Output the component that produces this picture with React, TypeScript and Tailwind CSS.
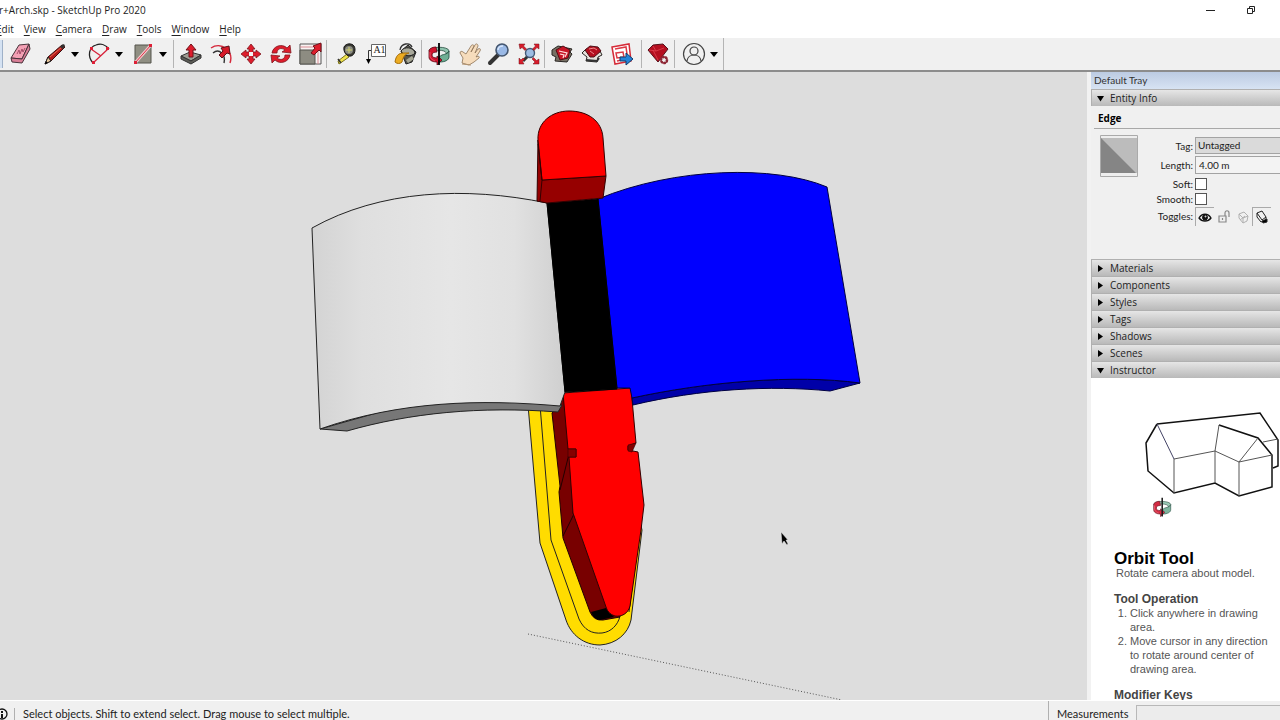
import type { ReactNode } from "react";
import clsx from "clsx";

const menus = ["Edit", "View", "Camera", "Draw", "Tools", "Window", "Help"];
const closedPanels = ["Materials", "Components", "Styles", "Tags", "Shadows", "Scenes"];

function Icon({ children }: { children: ReactNode }) {
  return (
    <svg viewBox="0 0 24 24" className="size-6" fill="none" aria-hidden="true">
      {children}
    </svg>
  );
}

function Tool({ label, children }: { label: string; children: ReactNode }) {
  return (
    <button aria-label={label} className="flex w-[30px] shrink-0 items-center justify-center">
      <Icon>{children}</Icon>
    </button>
  );
}

function DropArrow({ label }: { label: string }) {
  return (
    <button aria-label={label} className="flex w-2.5 shrink-0 items-center justify-center">
      <svg viewBox="0 0 8 5" className="h-[5px] w-2 shrink-0">
        <path d="M0 0h8L4 5z" fill="#000" />
      </svg>
    </button>
  );
}

function Group({ className, children }: { className: string; children: ReactNode }) {
  return <div className={clsx("flex h-7 shrink-0 items-center border-r border-[#b4b4b4]", className)}>{children}</div>;
}

function OrbitShape() {
  return (
    <>
      <path d="M2 9c0-5 20-5 20 0l-3 3c2-5-16-5-14 0z" fill="#8fc4ae" stroke="#2b4f43" strokeWidth=".8" />
      <path d="M22 9v6c0 3-4 5-9 5l1-3-2-2 3-2c4-1 7-2 7-4z" fill="#6fae94" stroke="#1d4a3c" strokeWidth=".8" />
      <path d="M9 5C5 5 2 7 2 9v6c0 3 3 5 8 5v3l5-5-5-4v2c-3 0-5-1-5-3s2-3 5-3z" fill="#d0142e" stroke="#5c0a16" strokeWidth=".8" />
      <path d="M3 10v5c1 2 3 3 5 4" stroke="#ea6373" strokeWidth=".8" />
      <path d="M12 1v22" stroke="#000" strokeWidth="1.8" />
    </>
  );
}

function Toolbar() {
  return (
    <div role="toolbar" className="flex h-8 shrink-0 items-center overflow-hidden bg-[#f0f0f0]">
      <div className="flex h-full shrink-0 items-center border-r border-[#b4b4b4]">
        <div className="h-7 w-[3px] shrink-0 border-r border-[#9fb1c8] bg-[#d5e2f2]" />
        <Group className="gap-1 pr-[5px] pl-[3px]">
          <Tool label="Eraser">
            <path d="M2 16 10 3l10-1-7 15z" fill="#f3a0b4" stroke="#49333b" />
            <path d="m2 16 11 1 7-15 1 5-8 14-10-1z" fill="#d97f97" stroke="#49333b" />
            <path d="m8 12 2-4 1 4 2-5 1 3 2-4" stroke="#a24d68" />
          </Tool>
          <div className="flex">
            <Tool label="Line">
              <path d="m2 22 3-7L19 3l3 2L8 19z" fill="#b31a1a" stroke="#3a1111" />
              <path d="m2 22 3-7 3 4z" fill="#e8c79a" stroke="#222" />
              <path d="m2 22 1-3 2 2z" fill="#000" />
              <path d="m7 15 12-10" stroke="#ec6752" />
              <path d="m17 5 3-3 2 1-2 4z" fill="#333" />
            </Tool>
            <DropArrow label="Line options" />
          </div>
          <div className="flex">
            <Tool label="Arc">
              <path d="M6 21C0 14 2 5 9 3c5-2 10 0 13 4" stroke="#222" strokeWidth="1.3" />
              <path d="M6 21 21 7M4 7l10 7" stroke="#d7233b" strokeWidth="1.3" />
              <path d="M5 19h3v3H5zM19 5h3v3h-3zM3 5h3v3H3z" fill="#dd1f36" />
            </Tool>
            <DropArrow label="Arc options" />
          </div>
          <div className="flex">
            <Tool label="Rectangle">
              <path d="M4 3h16v18H4z" fill="#908f83" stroke="#55544d" />
              <path d="M4 21 20 3" stroke="#f5c9cc" strokeWidth="3" />
              <path d="M4 21 20 3" stroke="#da3348" />
              <path d="M3 19h3v3H3zM18 2h3v3h-3z" fill="#dd1f36" />
            </Tool>
            <DropArrow label="Rectangle options" />
          </div>
        </Group>
        <Group className="pl-0.5">
          <Tool label="Push/Pull">
            <path d="m2 14 9-4 11 3-10 6z" fill="#9c9c92" stroke="#333" />
            <path d="m2 14 10 5 10-6v3l-10 6-10-5z" fill="#5d5d57" stroke="#333" />
            <path d="M10 15V8H7l5-6 5 6h-3v7z" fill="#de1d2c" stroke="#70121a" />
          </Tool>
          <Tool label="Offset">
            <path d="M2 6C12-1 25 9 21 21" stroke="#d5283b" strokeWidth="1.4" />
            <path d="M4 11c6-5 13 1 11 10" stroke="#333" strokeWidth="1.4" />
            <path d="m10 13 4-4-2-3 8-2 1 8-3-1-5 5z" fill="#d51928" stroke="#5d1118" />
          </Tool>
          <Tool label="Move">
            <path
              d="m12 2 4 5h-2v3h3V8l5 4-5 4v-2h-3v3h2l-4 5-4-5h2v-3H7v2l-5-4 5-4v2h3V7H8z"
              fill="#de1d2c"
              stroke="#7f1820"
              strokeWidth=".8"
            />
            <path d="M10 10h4v4h-4z" fill="#f5f5f5" />
          </Tool>
          <Tool label="Rotate">
            <path d="M3 11C4 4 13 1 18 6l3-3 1 8-9-1 3-2C12 5 8 7 8 11z" fill="#de1d2c" stroke="#7f1820" strokeWidth=".8" />
            <path d="M21 13c-1 7-10 10-15 5l-3 3-1-8 9 1-3 2c4 3 8 1 8-3z" fill="#de1d2c" stroke="#7f1820" strokeWidth=".8" />
          </Tool>
          <Tool label="Scale">
            <path d="M1 2h21v20H1z" fill="#f8f2f2" stroke="#555" />
            <path d="M19 7v15M1 5h15" stroke="#d88c93" />
            <path d="M1 8h15v14H1z" fill="#8d8c82" stroke="#55544e" />
            <path d="m12 11 4-5-2-2 8-3v9l-2-2-5 5z" fill="#de1d2c" stroke="#70121a" />
          </Tool>
        </Group>
        <Group className="pl-1">
          <Tool label="Tape Measure">
            <path d="m4 19 9-7 2 3-10 7z" fill="#efe34c" stroke="#7a721a" />
            <path d="M10 5c2-4 8-4 10-1s1 9-3 10-8-4-7-9z" fill="#3c3c35" stroke="#151515" />
            <circle cx="15" cy="8" r="4" fill="#8c8d83" />
            <path d="M15 5v6m-3-3h6" stroke="#d2d36d" />
            <path d="m4 17 3 4" stroke="#333" strokeWidth="1.5" />
          </Tool>
          <button aria-label="Text" className="relative flex w-[30px] shrink-0 items-center justify-center">
            <Icon>
              <path d="M7.500 2.500h14v12h-14z" fill="#fff" stroke="#666" />
              <path d="M7 8.500H4.500V18" stroke="#333" />
              <path d="M2 17h5l-2.500 5z" fill="#000" />
            </Icon>
            <span className="absolute inset-y-0 right-1 w-[15px] text-center font-['Liberation_Serif',serif] text-[10px] leading-[16px]">
              A1
            </span>
          </button>
          <Tool label="Paint Bucket">
            <path d="m7 9 7-6 8 7-4 10-6 2z" fill="#55554c" stroke="#202020" />
            <path d="M7 9c3-5 13-4 14 2-3 4-11 4-14-2z" fill="#a9a99b" stroke="#222" />
            <path d="M6 8c1-7 10-8 12-3" stroke="#333" strokeWidth="1.3" />
            <path d="M1 20c1-6 3-9 9-9l5 0c-4 1-6 4-7 9-2 2-5 2-7 0z" fill="#ecac22" stroke="#a56e0c" />
            <path d="m12 18 6-4 2 3-6 4z" fill="#a7a794" />
          </Tool>
        </Group>
        <Group className="pl-0.5">
          <Tool label="Orbit">
            <OrbitShape />
          </Tool>
          <Tool label="Pan">
            <path
              d="m5 21 1-5-3-5c0-2 2-2 3-1l3 2 5-8c1-2 3-1 3 0l-3 6 4-7c1-2 3-1 3 1l-3 7 3-4c2-1 3 0 2 2l-4 6c2-1 4-1 3 1l-5 4-5 3z"
              fill="#f6dcbc"
              stroke="#8d7256"
              strokeWidth=".8"
            />
            <path d="m5 22 9 1" stroke="#b29370" />
          </Tool>
          <Tool label="Zoom">
            <path d="m3 21 8-8" stroke="#333" strokeWidth="4" strokeLinecap="round" />
            <circle cx="15" cy="8" r="6" fill="#9ab9e6" stroke="#44566f" strokeWidth="1.6" />
            <path d="M11 8c0-3 3-4 5-4" stroke="#d7e6fa" strokeWidth="1.5" />
          </Tool>
          <Tool label="Zoom Extents">
            <path d="m6 19 5-5" stroke="#333" strokeWidth="3" />
            <circle cx="13" cy="11" r="4.500" fill="#9dbce3" stroke="#425976" strokeWidth="1.4" />
            <path
              d="M2 2h6L6.500 4l3 3-1.500 1.500-3-3L3 7zM22 2v5l-2-1.500-3 3L15.500 7l3-3L17 2zM22 22h-6l2-2-3-3 1.500-1.500 3 3L22 17zM2 22v-6l2 2 2-2 1.500 1.500-2 2L7 22z"
              fill="#d91c2b"
              stroke="#701018"
              strokeWidth=".5"
            />
          </Tool>
        </Group>
        <Group className="pr-1 pl-0.5">
          <Tool label="3D Warehouse">
            <path d="m2 8 6-4 14 3-2 3 2 2-5 8-12-1 1-4-4-2z" fill="#777064" stroke="#292623" />
            <path d="m6 8 7-4 7 4-2 8-8 2z" fill="#c61526" stroke="#4d1017" />
            <path d="m9 9 8 2-2 4m-5-3 4 1-1 3" stroke="#ffdede" strokeWidth="1.2" />
          </Tool>
          <Tool label="Share Model">
            <path d="m2 11 4-4 14 2 2 4-4 2-1 5-11-1 1-4z" fill="#e6e3dc" stroke="#292623" />
            <path d="m5 8 5-4 8 1 3 4-7 6h-4z" fill="#b4101f" stroke="#4d1017" />
            <path d="m9 7 5-1 3 2m-7 1 4 3" stroke="#ee8a8e" />
            <path d="m6 18 11 1 2-3" stroke="#333" strokeWidth="2" />
          </Tool>
          <Tool label="Send to LayOut">
            <path d="m2 5 17-3 2 17-16 3z" fill="#fff" stroke="#d52b38" strokeWidth="1.5" />
            <path d="m5 7 11-2 1 7M6 11l7-1 1 5-7 1zM7 19l5-1" stroke="#dc3945" strokeWidth="1.5" />
            <path d="M10 15h6v-4l7 6-7 6v-4h-6z" fill="#2483d8" stroke="#123c6b" />
          </Tool>
        </Group>
        <Group className="px-px">
          <Tool label="Extension Warehouse">
            <path d="m2 8 5-5 10-1 5 5-10 13z" fill="#b50f20" stroke="#56111a" />
            <path d="m3 8 7 1 8-3M7 4l3 5M7 8l5 10" stroke="#e04350" strokeWidth=".8" />
            <circle cx="18" cy="18" r="3" fill="#eee" stroke="#8e2836" strokeWidth="2.500" strokeDasharray="2 1" />
            <circle cx="18" cy="18" r="3" stroke="#8e2836" strokeWidth="1.5" />
          </Tool>
        </Group>
        <div className="flex shrink-0 items-center px-1">
          <Tool label="Account">
            <circle cx="12" cy="12" r="10.500" stroke="#444" strokeWidth="1.2" />
            <circle cx="12" cy="9" r="4" stroke="#444" strokeWidth="1.2" />
            <path d="M5 19c1-8 13-8 14 0" stroke="#444" strokeWidth="1.2" />
          </Tool>
          <DropArrow label="Account menu" />
        </div>
      </div>
    </div>
  );
}

function Viewport() {
  return (
    <svg
      viewBox="0 72 1087 628"
      role="img"
      aria-label="Model view"
      className="h-full min-w-0 flex-1 bg-[#dddddd]"
      strokeLinejoin="round"
    >
      <defs>
        <linearGradient id="whiteArch">
          <stop offset="0" stopColor="#d3d3d3" />
          <stop offset=".2" stopColor="#dfdfdf" />
          <stop offset=".55" stopColor="#e6e6e6" />
          <stop offset=".8" stopColor="#e1e1e1" />
          <stop offset="1" stopColor="#cfcfcf" />
        </linearGradient>
      </defs>

      <path d="M528 634 842 700" stroke="#555" strokeDasharray="1 2" />

      {/* yellow band behind the pen */}
      <path
        d="M528 405 540 543 566 620C571 635 584 645 600 645 616 644 628 634 631 620L642 530 630 480 560 400z"
        fill="#ffdc00"
        stroke="#222"
      />
      <path
        d="M540 405 551 540 579 619C584 630 592 634 602 633 611 632 618 625 620 616M639 533 629 612"
        fill="none"
        stroke="#222"
      />

      {/* pen body */}
      <path
        d="M563 393 559 406 552 413 560 486 559 492 563 538 590 612Q594 621 603 620L620 617 573 513 570 450z"
        fill="#780000"
        stroke="#200"
      />
      <path d="M591 612 606 608 614 617 600 620Q594 620 591 612z" />
      <path d="M570 450 560 490M574 514 563 536" fill="none" stroke="#200" />
      <path
        d="M563 393 631 388 636 443 628 446 628 450 638 452 644 505 641 530 630 606C628 614 621 617 615 616Q608 614 606 607L573 513 569 457 576 457 576 449 568 449z"
        fill="#f00"
        stroke="#300"
      />
      <path d="M568 449h8v8h-8zM628 445l8-2-4 9-4-1z" fill="#850000" stroke="#300" strokeWidth=".6" />

      {/* white arch */}
      <path d="M320 429 347 431C410 413 480 406 558 412L562 405 440 395z" fill="#777" stroke="#222" />
      <path
        d="M312 228C380 190 465 186 547 203L565 392 560 406C480 399 400 401 320 429z"
        fill="url(#whiteArch)"
        stroke="#222"
      />

      {/* blue arch */}
      <path
        d="M632 398C705 382 795 374 860 383L830 391C770 385 700 389 633 405z"
        fill="#0000a8"
        stroke="#000040"
      />
      <path
        d="M598 199C675 167 775 165 827 187L860 383C795 374 705 382 632 398L630 388 617 388z"
        fill="#00f"
        stroke="#000040"
      />
      <path d="M547 203 598 199 617 389 565 392z" stroke="#000" />

      {/* pen cap */}
      <path d="M538 140 537 201 547 203 603 198 606 176 542 180z" fill="#960000" stroke="#300" />
      <path d="M538 140C537 122 552 111 569 111 588 111 602 121 603 138L606 176 542 180z" fill="#f00" stroke="#300" />
      <path d="M538 144 542 180 540 201" fill="none" stroke="#300" />

      <path d="m781 532 1 12 2-3 3 4 1-1-2-4h2z" stroke="#eee" strokeWidth=".5" />
    </svg>
  );
}

function PanelHeader({ title, open }: { title: string; open?: boolean }) {
  return (
    <button
      aria-expanded={!!open}
      className="flex h-[17px] w-full shrink-0 items-center gap-[5px] border-t border-l border-[#b0b0b0] bg-linear-to-b from-[#e6e6e6] to-[#b9b9b9] pl-[5px] text-left leading-4"
    >
      <svg viewBox="0 0 7 7" className="size-[7px] shrink-0">
        <path d={open ? "M0 1h7L3.5 6.5z" : "M1 0v7l5-3.5z"} fill="#000" />
      </svg>
      <span className="pl-px">{title}</span>
    </button>
  );
}

function EntityInfo() {
  return (
    <div className="flex h-[153px] shrink-0 flex-col bg-[#f0f0f0] font-[Lato,'Open_Sans',sans-serif] leading-4">
      <h2 className="ml-[3px] h-[23px] border-b border-[#a8a8a8] pt-1 pl-1 font-['Open_Sans',sans-serif] font-bold text-black">
        Edge
      </h2>
      <div className="flex pt-1.5 pl-[9px]">
        <svg viewBox="0 0 38 42" className="h-[42px] w-[38px] shrink-0" role="img" aria-label="Edge preview">
          <path d="M.5.5h37v41H.5z" fill="#eee" stroke="#aaa" />
          <path d="M1 3h36v35H1z" fill="#bcbcbc" />
          <path d="M1 3v35h35z" fill="#858585" />
        </svg>
        <div className="grid flex-1 grid-cols-[55px_1fr] items-center gap-x-[2px]">
          <label htmlFor="tag" className="pt-0.5 text-right">Tag:</label>
          <select
            id="tag"
            className="mt-0.5 h-[17px] appearance-none border border-r-0 border-[#a3a3a3] bg-[#dadada] pl-0.5 leading-[15px]"
          >
            <option>Untagged</option>
          </select>
          <label htmlFor="length" className="pt-0.5 text-right">Length:</label>
          <input
            id="length"
            defaultValue="4.00 m"
            className="mt-0.5 h-[18px] w-full border border-r-0 border-[#a3a3a3] bg-[#f3f3f3] pl-[3px]"
          />
          <label htmlFor="soft" className="pt-0.5 text-right">Soft:</label>
          <input id="soft" type="checkbox" className="mt-0.5 size-3 appearance-none border border-[#555] bg-white" />
          <label htmlFor="smooth" className="text-right leading-[14px]">Smooth:</label>
          <input id="smooth" type="checkbox" className="size-3 appearance-none border border-[#555] bg-white" />
          <span className="text-right">Toggles:</span>
          <div className="flex pt-px">
            <button aria-label="Visible" className="flex h-[19px] w-[19px] items-center justify-center border-t border-l border-[#aaa]">
              <svg viewBox="0 0 14 14" className="size-3.5 shrink-0" fill="none" stroke="#111">
                <path d="M1 8c3-5 9-5 12 0-3 4-9 4-12 0z" strokeWidth="1.3" />
                <circle cx="7" cy="7.5" r="2.5" fill="#111" />
                <circle cx="7.5" cy="6.5" r=".5" stroke="#fff" />
              </svg>
            </button>
            <button aria-label="Locked" className="flex h-[19px] w-[19px] items-center justify-center">
              <svg viewBox="0 0 14 14" className="size-3.5 shrink-0" fill="none" stroke="#888" strokeWidth="1.2">
                <path d="M2 6h7v6H2zM8 6V3c0-3 4-3 4 0v4M5.5 8v2" />
              </svg>
            </button>
            <button aria-label="Receive shadows" className="flex h-[19px] w-[19px] items-center justify-center">
              <svg viewBox="0 0 14 14" className="size-3.5 shrink-0" fill="none" stroke="#b0b0b0">
                <path d="m3 4 5-2 4 4-1 5-4 2-4-5zM3 4l4 4 5-2M7 8v5M4 10l5-4" />
              </svg>
            </button>
            <button aria-label="Cast shadows" className="flex h-[19px] w-[19px] items-center justify-center border-t border-l border-[#aaa]">
              <svg viewBox="0 0 14 14" className="size-3.5 shrink-0" fill="none" stroke="#222">
                <path d="m2 3 5-2 4 6-4 3zM2 3v4l4 5 5-2V7" />
                <path d="m7 11 5-2v3l-4 1z" fill="#000" />
              </svg>
            </button>
          </div>
        </div>
      </div>
    </div>
  );
}

function Instructor() {
  return (
    <div className="min-h-0 flex-1 overflow-hidden bg-white font-['Liberation_Sans',Arial,sans-serif] text-[11px] leading-[14px] text-[#555]">
      <svg viewBox="0 0 189 174" className="h-[174px] w-full" fill="none" role="img" aria-label="Orbiting around a house">
        <g stroke="#111" strokeWidth="1.5">
          <path d="m66 46 103-11 18 27v26l-5 2" />
          <path d="M66 46 55 65l2 28 26 22 41-10 24 13 33-9V77l-14-17-39-13" />
        </g>
        <path d="M83 115V81l41-8v32M124 73l4-26M124 73l24 11v34M148 84l33-7M148 84l19-24M172 64l15-3" stroke="#555" />
        <path d="m66 46 17 35" stroke="#446" />
        <g transform="translate(61 119) scale(.85)" opacity=".9">
          <OrbitShape />
        </g>
      </svg>
      <div className="pl-[23px]">
        <h2 className="text-[17px] leading-[14px] font-bold text-black">Orbit Tool</h2>
        <p className="pl-0.5 whitespace-nowrap">Rotate camera about model.</p>
        <h3 className="mt-3 text-[12px] font-bold text-[#444]">Tool Operation</h3>
        <ol className="list-decimal pr-1 pl-4">
          <li>Click anywhere in drawing area.</li>
          <li>Move cursor in any direction to rotate around center of drawing area.</li>
        </ol>
        <h3 className="mt-3 text-[12px] font-bold text-[#444]">Modifier Keys</h3>
      </div>
    </div>
  );
}

export default function App() {
  return (
    <div className="flex h-screen flex-col overflow-hidden bg-[#f0f0f0] font-['Open_Sans','Noto_Sans',sans-serif] text-[10px] text-[#222]">
      <header className="flex h-5 shrink-0 items-center justify-between bg-white">
        <h1 className="-ml-px whitespace-nowrap">r+Arch.skp - SketchUp Pro 2020</h1>
        <div className="flex gap-4 pr-[17px]">
          <button aria-label="Minimize" className="flex h-5 w-6 items-center justify-center">
            <svg viewBox="0 0 10 10" className="size-2.5">
              <path d="M0 5.5h9" stroke="#222" />
            </svg>
          </button>
          <button aria-label="Restore" className="flex h-5 w-6 items-center justify-center">
            <svg viewBox="0 0 10 10" className="size-2.5" fill="none" stroke="#222">
              <path d="M1.5 3.5h5v5h-5zM3.5 3.5v-2h5v5h-2" />
            </svg>
          </button>
        </div>
      </header>
      <nav className="-ml-1 flex h-[18px] shrink-0 items-center gap-2.5 bg-white">
        {menus.map((menu) => (
          <button key={menu}>
            <span className="underline underline-offset-2">{menu[0]}</span>
            {menu.slice(1)}
          </button>
        ))}
      </nav>
      <Toolbar />
      <main className="flex min-h-0 flex-1 border-t-2 border-[#8c8c8c]">
        <Viewport />
        <aside className="flex w-[193px] shrink-0 flex-col overflow-hidden border-l-4 border-[#f2f2f2]">
          <div className="h-[17px] shrink-0 bg-linear-to-b from-[#bccbe2] to-[#d7e3f3] pl-[3px] font-[Lato,'Open_Sans',sans-serif] leading-[17px] text-[#333]">
            Default Tray
          </div>
          <PanelHeader title="Entity Info" open />
          <EntityInfo />
          {closedPanels.map((title) => (
            <PanelHeader key={title} title={title} />
          ))}
          <PanelHeader title="Instructor" open />
          <Instructor />
        </aside>
      </main>
      <footer className="flex h-5 shrink-0 items-stretch justify-between border-t border-white font-[Lato,'Open_Sans',sans-serif] text-[11px] leading-[25px]">
        <div className="flex items-center pt-1.5">
          <svg viewBox="0 0 12 12" className="-ml-1 size-3 shrink-0" fill="none" stroke="#111">
            <circle cx="6" cy="6" r="5" strokeWidth="1.3" />
            <path d="M6 3v2M6 6v4" strokeWidth="2" />
          </svg>
          <span className="ml-1.5 h-3 border-l border-[#b0b0b0]" />
          <span className="pl-2 leading-4 whitespace-nowrap">
            Select objects. Shift to extend select. Drag mouse to select multiple.
          </span>
        </div>
        <div className="flex w-[232px] shrink-0 border-l border-[#b0b0b0]">
          <label htmlFor="measure" className="w-[87px] shrink-0 pl-2">Measurements</label>
          <input id="measure" className="mt-1 min-w-0 flex-1 border-t border-l border-[#b8b8b8] bg-[#ececec]" />
        </div>
      </footer>
    </div>
  );
}
